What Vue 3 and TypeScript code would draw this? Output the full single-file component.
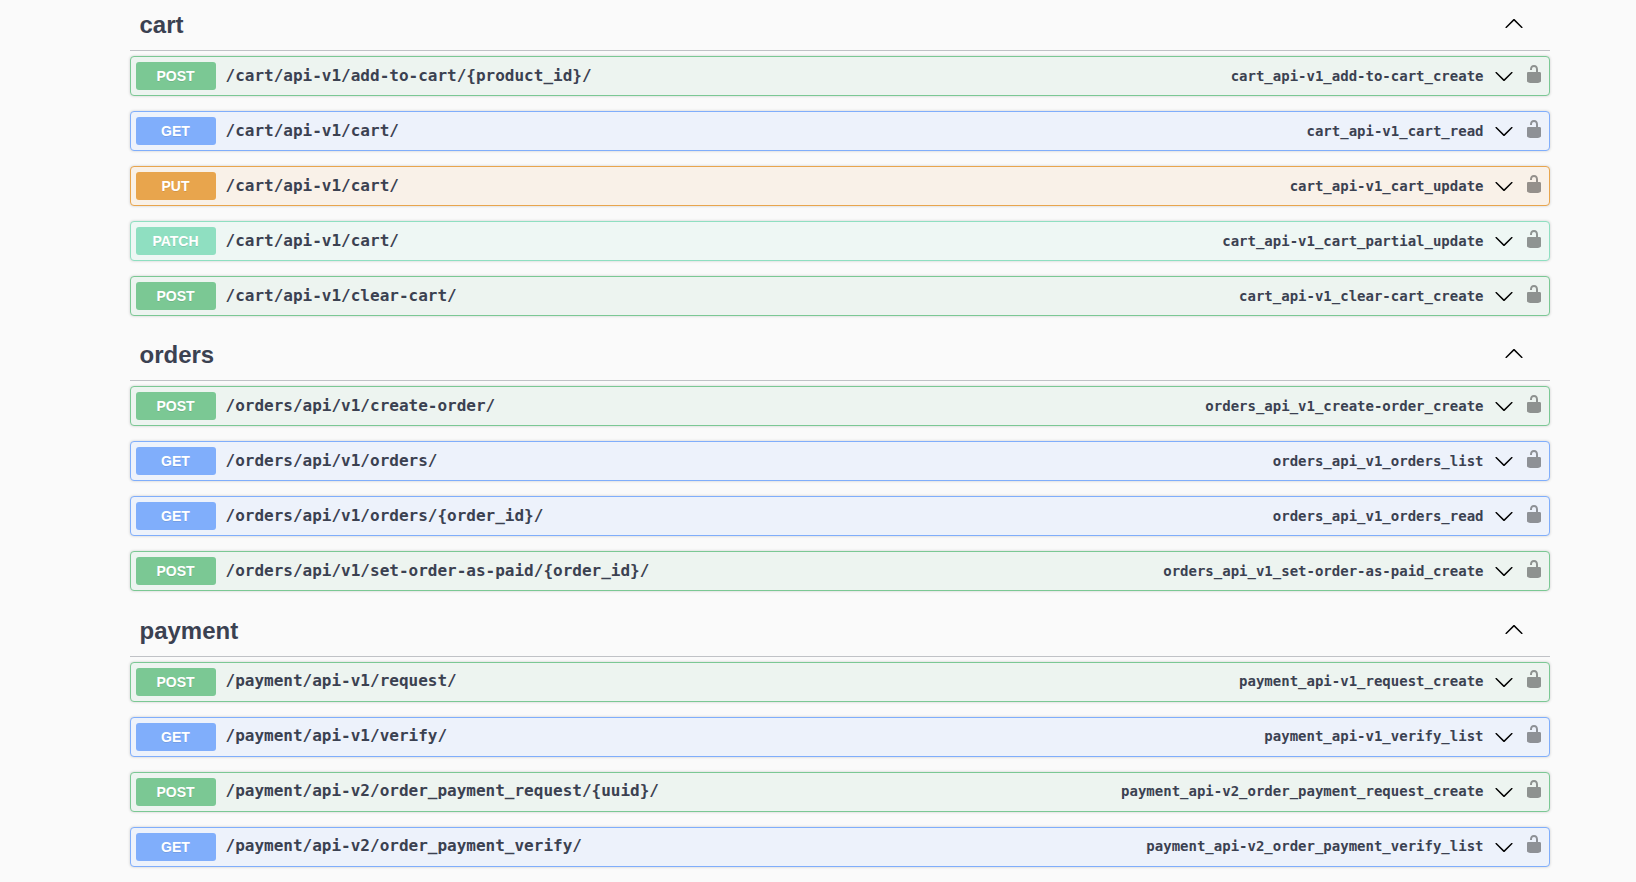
<script setup lang="ts">
type Op = { method: string; path: string; id: string };
type Tag = { name: string; ops: Op[] };

const tags: Tag[] = [
  {
    name: "cart",
    ops: [
      { method: "post", path: "/cart/api-v1/add-to-cart/{product_id}/", id: "cart_api-v1_add-to-cart_create" },
      { method: "get", path: "/cart/api-v1/cart/", id: "cart_api-v1_cart_read" },
      { method: "put", path: "/cart/api-v1/cart/", id: "cart_api-v1_cart_update" },
      { method: "patch", path: "/cart/api-v1/cart/", id: "cart_api-v1_cart_partial_update" },
      { method: "post", path: "/cart/api-v1/clear-cart/", id: "cart_api-v1_clear-cart_create" },
    ],
  },
  {
    name: "orders",
    ops: [
      { method: "post", path: "/orders/api/v1/create-order/", id: "orders_api_v1_create-order_create" },
      { method: "get", path: "/orders/api/v1/orders/", id: "orders_api_v1_orders_list" },
      { method: "get", path: "/orders/api/v1/orders/{order_id}/", id: "orders_api_v1_orders_read" },
      { method: "post", path: "/orders/api/v1/set-order-as-paid/{order_id}/", id: "orders_api_v1_set-order-as-paid_create" },
    ],
  },
  {
    name: "payment",
    ops: [
      { method: "post", path: "/payment/api-v1/request/", id: "payment_api-v1_request_create" },
      { method: "get", path: "/payment/api-v1/verify/", id: "payment_api-v1_verify_list" },
      { method: "post", path: "/payment/api-v2/order_payment_request/{uuid}/", id: "payment_api-v2_order_payment_request_create" },
      { method: "get", path: "/payment/api-v2/order_payment_verify/", id: "payment_api-v2_order_payment_verify_list" },
    ],
  },
];
</script>

<template>
  <div class="wrapper">
    <section v-for="tag in tags" :key="tag.name" class="tag-section">
      <h3 class="tag">
        <span class="tag-name">{{ tag.name }}</span>
        <svg class="tag-arrow" viewBox="0 0 20 20" width="20" height="20">
          <path d="M17.418 14.908c.272.268.709.268.979 0s.271-.701 0-.969l-7.908-7.83c-.27-.268-.707-.268-.979 0l-7.908 7.83c-.27.268-.27.701 0 .969.271.268.709.268.979 0L10 7.75l7.418 7.158z" />
        </svg>
      </h3>
      <div v-for="op in tag.ops" :key="op.id" class="opblock" :class="op.method">
        <span class="method">{{ op.method.toUpperCase() }}</span>
        <span class="path">{{ op.path }}</span>
        <span class="op-id">{{ op.id }}</span>
        <span class="arrow">
          <svg viewBox="0 0 20 20" width="20" height="20">
            <path d="M17.418 6.109c.272-.268.709-.268.979 0s.271.701 0 .969l-7.908 7.83c-.27.268-.707.268-.979 0l-7.908-7.83c-.27-.268-.27-.701 0-.969.271-.268.709-.268.979 0L10 13.25l7.418-7.141z" />
          </svg>
        </span>
        <svg class="lock" viewBox="0 0 20 20" width="20" height="20">
          <path d="M15.8 8H14V5.6C14 2.703 12.665 1 10 1 7.334 1 6 2.703 6 5.6V6h2v-.801C8 3.754 8.797 3 10 3c1.203 0 2 .754 2 2.199V8H4c-.553 0-1 .646-1 1.199V17c0 .549.428 1.139.951 1.307l1.197.387C5.672 18.861 6.55 19 7.1 19h5.8c.549 0 1.428-.139 1.951-.307l1.196-.387c.524-.167.953-.757.953-1.306V9.199C17 8.646 16.352 8 15.8 8z" />
        </svg>
      </div>
    </section>
  </div>
</template>

<style>
html,
body {
  background: #fafafa;
}
</style>

<style scoped>
.wrapper {
  width: 1420px;
  margin-left: 129.5px;
  padding-top: 0.6px;
  font-family: "Liberation Sans", sans-serif;
  color: #3b4151;
}

.tag {
  display: flex;
  align-items: center;
  justify-content: space-between;
  box-sizing: border-box;
  height: 50.45px;
  margin: 0 0 5px;
  padding: 0 26px 1px 10px;
  border-bottom: 1px solid rgba(59, 65, 81, 0.3);
  font-size: 24px;
  font-weight: 700;
}

.tag-arrow {
  margin-top: -4px;
}

.opblock {
  display: flex;
  align-items: center;
  box-sizing: border-box;
  height: 40px;
  margin-bottom: 15px;
  padding: 0 5px;
  border: 1px solid;
  border-radius: 4px;
  box-shadow: 0 0 3px rgba(0, 0, 0, 0.19);
}

.method {
  width: 80px;
  height: 28px;
  flex: none;
  border-radius: 3px;
  color: #fff;
  font-size: 14px;
  font-weight: 700;
  line-height: 28px;
  text-align: center;
  text-shadow: 0 1px 0 rgba(0, 0, 0, 0.1);
}

.path {
  flex: 1;
  padding: 0 10px 2px;
  font-family: "DejaVu Sans Mono", monospace;
  font-size: 16px;
  font-weight: 600;
}

.op-id {
  padding-bottom: 1px;
  font-family: "DejaVu Sans Mono", monospace;
  font-size: 14px;
  font-weight: 600;
}

.arrow {
  display: flex;
  padding: 0 10px;
}

.lock {
  flex: none;
  fill: rgba(0, 0, 0, 0.4);
  margin-top: -5px;
}

.post {
  background: #edf4f0;
  border-color: #7bc894;
}
.post .method {
  background: #7bc894;
}
.get {
  background: #edf2fb;
  border-color: #80aefb;
}
.get .method {
  background: #80aefb;
}
.put {
  background: #f9f1e8;
  border-color: #e8a54d;
}
.put .method {
  background: #e8a54d;
}
.patch {
  background: #eef7f4;
  border-color: #8fdfc1;
}
.patch .method {
  background: #8fdfc1;
}
</style>
